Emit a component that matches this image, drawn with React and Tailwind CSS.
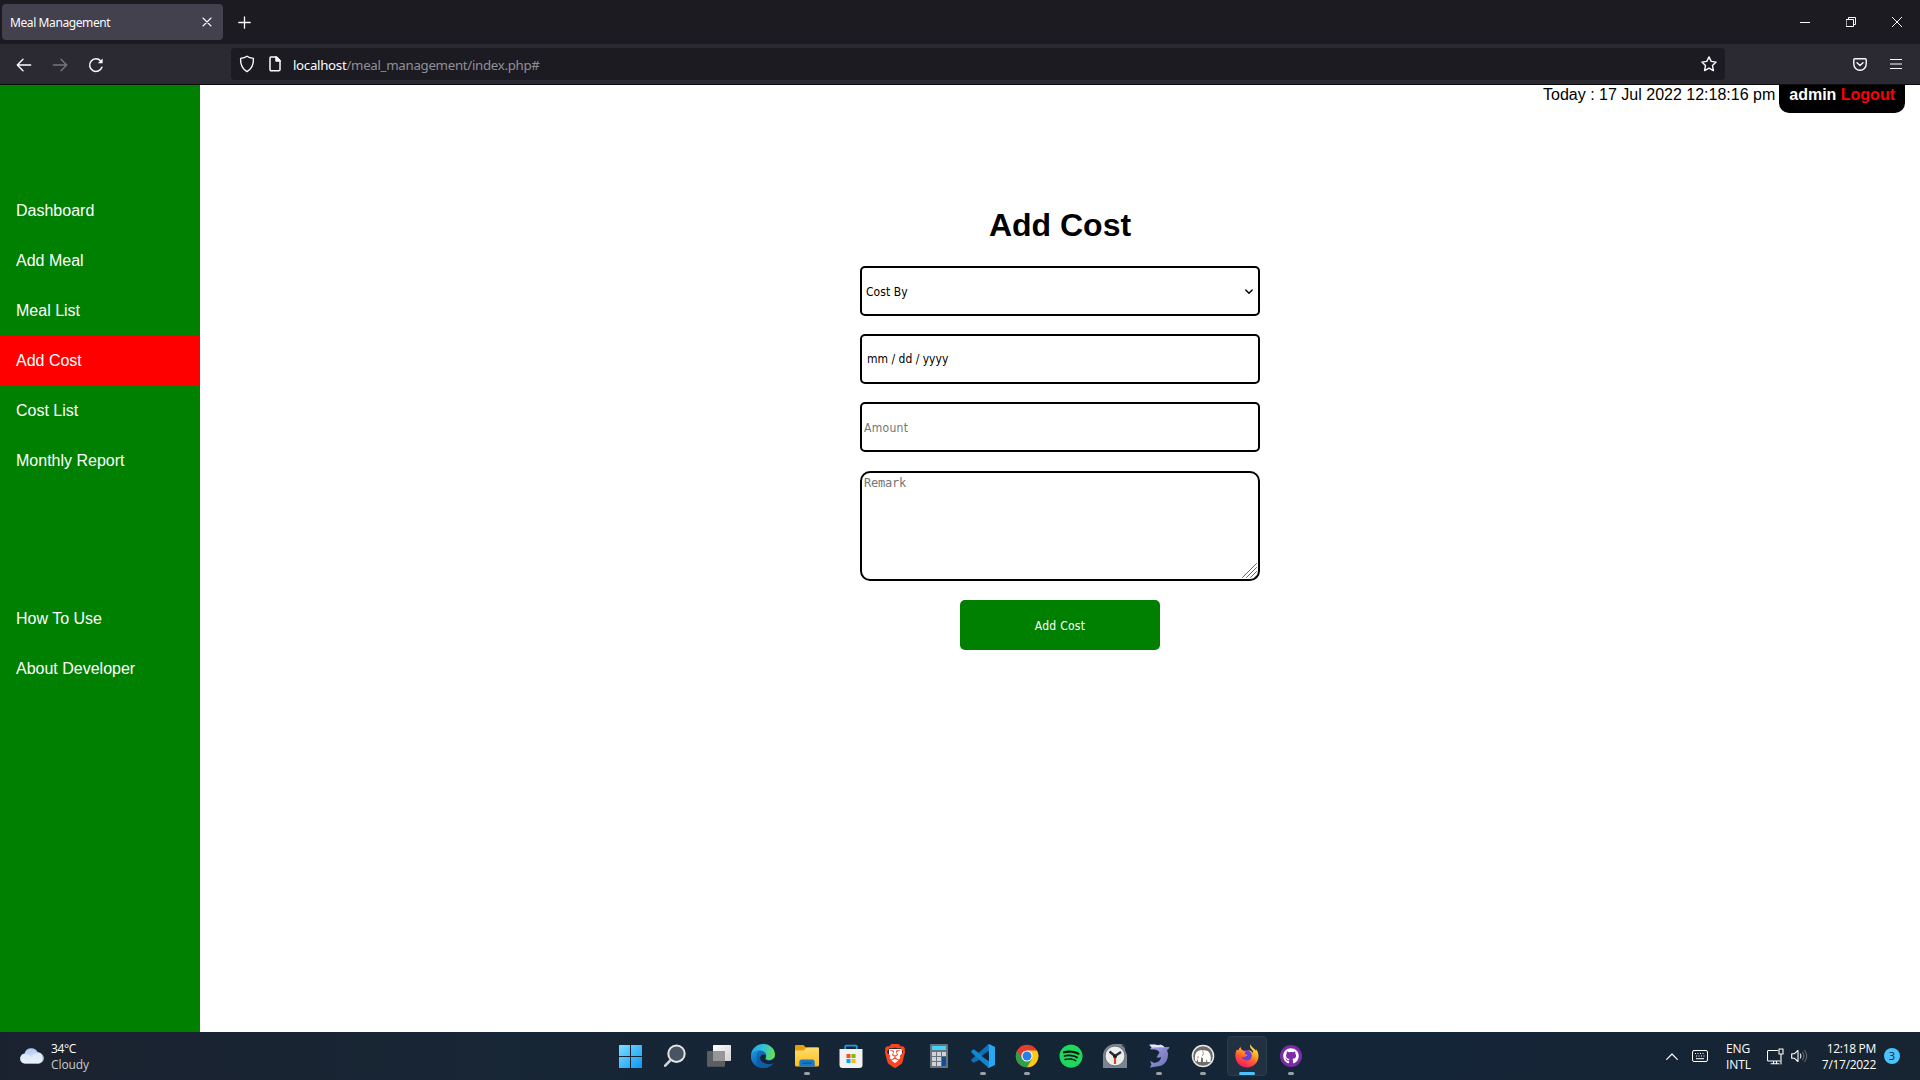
import { FaBrave, FaGithub, FaSpotify } from "react-icons/fa6";

const mainLinks = ["Dashboard", "Add Meal", "Meal List", "Add Cost", "Cost List", "Monthly Report"];
const helpLinks = ["How To Use", "About Developer"];

function Ico({ w = 16, h = w, box, className = "", children, sw = 1.4 }) {
  return (
    <svg width={w} height={h} viewBox={box || `0 0 ${w} ${h}`} className={"block shrink-0 " + className} fill="none" stroke="currentColor" strokeWidth={sw} strokeLinecap="round" strokeLinejoin="round">
      {children}
    </svg>
  );
}

function TabBar() {
  return (
    <div className="flex h-11 items-center bg-[#1c1b22] text-[#fbfbfe]">
      <div className="ml-0.5 flex h-9 w-[221px] items-center justify-between rounded bg-[#42414d] pl-2 pr-[11px]">
        <span className="pt-0.5 font-['Noto_Sans'] text-[12px] leading-4 tracking-[-0.400px]">Meal Management</span>
        <Ico w={10} sw={1.1}><path d="M1 1l8 8M9 1l-8 8" /></Ico>
      </div>
      <Ico w={13} className="ml-[15px]" sw={1.3}><path d="M6.5 .8v11.4M.8 6.5h11.4" /></Ico>
      <div className="ml-auto flex items-center gap-9 pr-[18px]">
        <Ico w={10} className="-mt-px" sw={1}><path d="M0 5.5h10" strokeLinecap="butt" /></Ico>
        <Ico w={10} sw={1}><path d="M.5 2.5h7v7h-7zM2.5 2V.5h7v7H8" strokeLinejoin="miter" /></Ico>
        <Ico w={10} sw={1}><path d="M.3.3l9.4 9.4M9.7.3L.3 9.7" /></Ico>
      </div>
    </div>
  );
}

function Toolbar() {
  return (
    <div className="flex h-[41px] items-center border-b border-[#0c0c0d] bg-[#2b2a33] text-[#fbfbfe]">
      <Ico w={16} className="ml-4 mt-px"><path d="M14.7 8H1.5M7 2.3L1.3 8 7 13.7" /></Ico>
      <Ico w={16} className="ml-5 mt-px text-[#76757c]"><path d="M1.3 8h13.2M9 2.3L14.7 8 9 13.7" /></Ico>
      <Ico w={16} className="ml-5 mt-px" sw={1.5}>
        <path d="M13.9 10.2A6.3 6.3 0 1 1 12.7 4" />
        <path d="M14.6 1.4v4.9H9.8z" fill="currentColor" stroke="none" />
      </Ico>
      <div className="ml-[127px] flex h-8 w-[1494px] items-center rounded bg-[#1c1b22]">
        <Ico w={16} h={18} className="ml-2" sw={1.4}><path d="M8 1.2c2 1.5 4 1.9 6.4 2.2.3 6-.9 10-6.4 13.2C2.500 13.400 1.300 9.400 1.600 3.400 4 3.100 6 2.700 8 1.200z" /></Ico>
        <Ico w={12} h={16} className="ml-[14px]" sw={1.5}>
          <path d="M2 1h5.500L11 4.500V13.500a1.200 1.200 0 0 1-1.200 1.200H2.200A1.200 1.200 0 0 1 1 13.500V2.200A1.200 1.200 0 0 1 2 1z" />
          <path d="M7 1v4h4z" fill="currentColor" />
        </Ico>
        <span className="ml-[12px] pt-0.5 font-['Noto_Sans'] text-[13.300px] leading-5 tracking-[-0.310px]">
          localhost<span className="text-[#8f8f98]">/meal_management/index.php#</span>
        </span>
        <Ico w={16} className="ml-auto mr-2" sw={1.400}><path d="M8 .900l2.200 4.500 4.900.700-3.600 3.500.900 5L8 12.200l-4.400 2.400.900-5L.900 6.100l4.900-.700z" /></Ico>
      </div>
      <Ico w={14} h={13} className="ml-auto" sw={1.400}>
        <path d="M1.800.800h10.400q1 0 1 1V6a6.200 6.200 0 0 1-12.400 0V1.800q0-1 1-1z" />
        <path d="M4 4.800l3 2.700 3-2.700" />
      </Ico>
      <Ico w={12} h={12} className="ml-[23px] mr-[18px]" sw={1.200}><path d="M0 1.500h12M0 6h12M0 10.500h12" /></Ico>
    </div>
  );
}

function NavLink({ label, active }) {
  return (
    <a href="#" className={"flex h-[50px] items-center pl-4 pt-0.5 " + (active ? "bg-[#ff0000]" : "")}>
      {label}
    </a>
  );
}

function Sidebar() {
  return (
    <nav className="w-[200px] shrink-0 bg-[#008000] pt-[100px] text-white">
      {mainLinks.map((l) => <NavLink key={l} label={l} active={l === "Add Cost"} />)}
      <div className="mt-[108px]">
        {helpLinks.map((l) => <NavLink key={l} label={l} />)}
      </div>
    </nav>
  );
}

const field = "block w-[400px] border-2 border-black bg-white outline-none font-['DejaVu_Sans_Condensed','DejaVu_Sans'] [font-stretch:condensed] text-[12px]";

function CostForm() {
  return (
    <form className="flex w-[400px] flex-col items-center">
      <h1 className="text-[32px] font-bold leading-9">Add Cost</h1>
      <div className="relative mt-[23px]">
        <select className={field + " h-[50px] appearance-none rounded-[5px] pl-1 pt-0.5 tracking-[0.050px]"}>
          <option>Cost By</option>
        </select>
        <Ico w={8} h={6} className="pointer-events-none absolute right-[7px] top-[23px]" sw={1.400}><path d="M.800.900L4 4.300 7.200.900" /></Ico>
      </div>
      <input placeholder="mm / dd / yyyy" className={field + " mt-[18px] h-[50px] rounded-[5px] pl-[5px] placeholder:text-black placeholder:opacity-100"} />
      <input placeholder="Amount" className={field + " mt-[18px] h-[50px] rounded-[5px] pl-[2px] pt-0.5 tracking-[0.300px] placeholder:text-[#757575]"} />
      <div className="relative mt-[19px]">
        <textarea placeholder="Remark" className="block h-[110px] w-[400px] resize-none rounded-[10px] border-2 border-black px-[2px] pt-[2px] font-['DejaVu_Sans_Mono'] text-[12px] leading-4 tracking-[-0.200px] outline-none placeholder:text-[#757575]" />
        <Ico w={15} h={15} className="absolute bottom-[3px] right-[3px] text-[#666]" sw={1}><path d="M.500 14.500l14-14M4.500 14.500l10-10M8.500 14.500l6-6M12.500 14.500l2-2" /></Ico>
      </div>
      <button type="button" className="mt-[19px] h-[50px] w-[200px] rounded-[5px] bg-[#008000] pt-0.5 font-['DejaVu_Sans_Condensed','DejaVu_Sans'] text-[12px] tracking-[0.250px] text-white [font-stretch:condensed]">Add Cost</button>
    </form>
  );
}

function Defs() {
  return (
    <svg width="0" height="0" className="absolute">
      <defs>
        <linearGradient id="win" x1="0" y1="0" x2="24" y2="24" gradientUnits="userSpaceOnUse"><stop stopColor="#7fe0fd" /><stop offset="1" stopColor="#0a95f2" /></linearGradient>
        <linearGradient id="white" x1="0" y1="0" x2="1" y2="1"><stop stopColor="#fff" /><stop offset="1" stopColor="#d0d0d0" /></linearGradient>
        <linearGradient id="edgeA" x1="0" y1="0.300" x2="1" y2="0.500"><stop stopColor="#27a5e5" /><stop offset=".5" stopColor="#30c3d5" /><stop offset="1" stopColor="#68e04a" /></linearGradient>
        <linearGradient id="edgeB" x1="0" y1="0" x2="0.500" y2="1"><stop stopColor="#1f9be6" /><stop offset="1" stopColor="#0b57a8" /></linearGradient>
        <linearGradient id="fold" x1="0" y1="0" x2="0" y2="1"><stop stopColor="#ffdc6b" /><stop offset="1" stopColor="#fcbd1e" /></linearGradient>
        <linearGradient id="ff" x1="0.800" y1="0" x2="0.300" y2="1"><stop stopColor="#fff04a" /><stop offset=".35" stopColor="#ffae1f" /><stop offset=".65" stopColor="#ff5733" /><stop offset="1" stopColor="#f5156c" /></linearGradient>
        <linearGradient id="dol" x1="0" y1="0" x2="1" y2="1"><stop stopColor="#a9a5e8" /><stop offset="1" stopColor="#6a70b5" /></linearGradient>
        <linearGradient id="cloud" x1="0" y1="0" x2="0" y2="1"><stop stopColor="#aac6f4" /><stop offset="1" stopColor="#eff5fd" /></linearGradient>
      </defs>
    </svg>
  );
}

function A({ children }) {
  return <svg width="24" height="24" viewBox="0 0 24 24" className="block">{children}</svg>;
}

const WinIcon = () => (
  <A><path fill="url(#win)" d="M0 1.500a.5.5 0 0 1 .5-.5H11V12H0zM12 1H22.500a.5.5 0 0 1 .5.5V12h-11zM0 13H11V24H.5a.5.5 0 0 1-.5-.5zM12 13h11V23.500a.5.5 0 0 1-.5.5H12z" /></A>
);
const SearchIcon = () => (
  <A>
    <circle cx="13.500" cy="9.700" r="8.200" fill="#485462" stroke="#e6e6e6" strokeWidth="2" />
    <path d="M7.600 16.200L2.200 21.700" stroke="#d4d4d4" strokeWidth="2.600" strokeLinecap="round" />
  </A>
);
const TaskViewIcon = () => (
  <A>
    <rect x="6" y="1" width="18" height="16" rx=".800" fill="url(#white)" />
    <rect x="0" y="7" width="18" height="15.700" rx=".800" fill="#5c5f62" />
    <rect x="6" y="7" width="12" height="10" fill="#969696" />
  </A>
);
const EdgeIcon = () => (
  <A>
    <circle cx="12" cy="12" r="12" fill="#1069bd" />
    <path d="M0 11.500C.700 4.500 6 0 12.200 0 19 0 24 5 24 10.600c0 3.400-2.700 5.400-5.800 5.400-2.700 0-4-1-4-1.700 0-.600 1-1 1-3 0-2.500-2.500-4.700-6-4.700C4.800 6.600 1 8.500 0 11.500z" fill="url(#edgeA)" />
    <path d="M0 12c.300-3.300 4.500-5.800 9-5.500-3 1.500-4 5-3.500 8.500.700 4.500 4 8 8.500 8.800C6 24.900-.500 19 0 12z" fill="url(#edgeB)" />
    <path d="M9 12.300c-.800 4.500 3.500 8 8.300 8 1.800 0 3.700-.700 4.800-1.300.500-.200.700.200.400.600C20 23 15 24.600 11.800 23.700 7.500 22.500 5.500 18.500 6.400 15c.400-1.600 1.300-2.500 2.600-2.700z" fill="#0f5ba4" />
    <path d="M14.700 13.700c-.500.600-.700 1.300.300 2.100 2.200 1.700 6.500 1 8-1.500l1-.600V18l-1.900 1.300c-4 2-10 .800-12.300-3-.900-1.500-.900-3.200.100-4.500 1.300-1.700 4.300-1.500 5.200-.400 0 1 0 1.700-.400 2.300z" fill="#142536" />
  </A>
);
const FolderIcon = () => (
  <A>
    <path d="M0 2a1 1 0 0 1 1-1h7.500L11 3.500H23a1 1 0 0 1 1 1V12H0z" fill="#e2a00d" />
    <path d="M0 6.500h8.500L11.500 3.600H23a1 1 0 0 1 1 1V21a1.500 1.500 0 0 1-1.500 1.500h-21A1.500 1.500 0 0 1 0 21z" fill="url(#fold)" />
    <path d="M4.300 22.500V18A2.500 2.500 0 0 1 6.800 15.500h10.400a2.500 2.500 0 0 1 2.500 2.500v4.500z" fill="#1779cc" />
    <path d="M8 19.200h8" stroke="#0c579d" strokeWidth="1.400" strokeLinecap="round" />
  </A>
);
const StoreIcon = () => (
  <A>
    <path d="M6.200 6V2.600Q6.200 1.700 7.100 1.700h9.800q.900 0 .9.900V6" fill="none" stroke="#1b9de2" strokeWidth="1.800" />
    <path d="M.500 5h23v16a3 3 0 0 1-3 3H3.500a3 3 0 0 1-3-3z" fill="#f2f2f2" />
    <path d="M7.500 10h4v4h-4z" fill="#f25022" /><path d="M12.500 10h4v4h-4z" fill="#7fba00" /><path d="M7.500 15h4v4h-4z" fill="#00a4ef" /><path d="M12.500 15h4v4h-4z" fill="#ffb900" />
  </A>
);
const BraveIcon = () => (
  <span className="relative grid size-6 place-items-center">
    <span className="absolute h-[15px] w-[13px] rounded-b-full bg-white" />
    <FaBrave size={24} color="#fb4420" className="relative" />
  </span>
);
const CalcIcon = () => (
  <A>
    <rect x="3" width="18" height="24" rx="1" fill="#68737e" />
    <rect x="5" y="2" width="14" height="4" fill="#46d3f7" />
    {[8, 13, 18].map((y) => [5, 10, 15].map((x) => <rect key={x + "-" + y} x={x} y={y} width="4" height="4" fill={x === 15 && y > 8 ? "#0d4ea3" : "#cdd3d9"} />))}
    <rect x="15" y="13" width="4" height="9" fill="#0d4ea3" />
  </A>
);
const CodeIcon = () => (
  <A>
    <path d="M17.500 0L24 3v4.500L3.200 18.600 2 18.400.300 16.700V15.500z" fill="#0c70b8" />
    <path d="M.300 8.500V7.300L2 5.600l1.200-.200L18.500 17l-.8 7z" fill="#1384cf" />
    <path d="M17.500 0L24 3v18l-6.500 3q-.600-.300-.900-.800.900.300 1.200-.700V1.300q0-.800-.7-1z" fill="#2ba7f2" />
    <path d="M17.800 6.700v10.600L10.500 12z" fill="#142536" />
  </A>
);
const ChromeIcon = () => (
  <A>
    <circle cx="12" cy="12" r="11.300" fill="#e43d30" />
    <path d="M2.200 6.400A11.300 11.300 0 0 0 12 23.300l5-8.500H7z" fill="#2da04c" />
    <path d="M21.900 6.400H12l5 8.500-5 8.400A11.300 11.300 0 0 0 21.900 6.400z" fill="#fdc917" />
    <circle cx="12" cy="12" r="5.600" fill="#fff" /><circle cx="12" cy="12" r="4.500" fill="#2b7de9" />
  </A>
);
const SpotifyIcon = () => (
  <span className="grid size-6 place-items-center rounded-full bg-[#08150d]"><FaSpotify size={24} color="#1ed760" /></span>
);
const ClockIcon = () => (
  <A>
    <path d="M0 24V12A12 12 0 0 1 12 0h7.500L22 2.500V6l2 5v13z" fill="#7a858f" />
    <path d="M18 .500h3L22.500 2v3z" fill="#33383e" />
    <circle cx="12" cy="12" r="9.900" fill="#ededed" stroke="#4c5660" strokeWidth=".700" />
    <path d="M12 12L6.500 7.500M12 12l6-4" stroke="#2a2d33" strokeWidth="2.400" />
    <path d="M12 13v7" stroke="#d6481c" strokeWidth="2.200" />
    <circle cx="12" cy="12.200" r="2" fill="#222" />
  </A>
);
const DolphinIcon = () => (
  <A>
    <path d="M2 .800C5.500.500 8.500.800 10.500 1.300L14 .200l.400 1.500C18.500 2.700 20.800 6 21 10c.3 6.500-3.500 11.700-9.600 12.300L6 23l-3 .800 1.500-3.500L3 17l4.300 2C12.500 18.300 14.600 15 14 11.500 13.500 8.700 11.500 6.200 7.500 5.600L3 5.200 4.500 3.500z" fill="url(#dol)" />
    <path d="M17.500 3c3 .400 4.900-.400 4.900 0 0 1.500-2 3.200-3.400 3.200zM13 7.500l-3.500 5.800c2.500.900 5 0 6-2z" fill="#8886cc" />
    <path d="M2.500.800C7 .200 9 .700 12 1.300l3-.300 3 2.500-4-.300-9 .200z" fill="#e9e8fb" />
  </A>
);
const MampIcon = () => (
  <A>
    <circle cx="12" cy="12" r="11.300" fill="#e8e8e8" /><circle cx="12" cy="12" r="9.800" fill="#6e6d68" />
    <path d="M4 15.800C3.500 11 5 7 8.500 6.600c1-.8 2-.8 3 0C16.500 5.500 19.500 8.500 19.800 13.500L19.500 18h-3.200l-.4-3.200-1 3.200H12l-.2-4-1.500-.8L9.800 18H7.300l-.5-3.200-1 2.700-1.300-.3z" fill="#fff" />
    <path d="M11.500 7.200c1.300 1.800 1 4-.7 5M6.800 14.500l.4-2.500" stroke="#6e6d68" strokeWidth=".700" fill="none" />
  </A>
);
const FirefoxIcon = () => (
  <A>
    <circle cx="12" cy="13" r="7" fill="#6c3fd6" />
    <path d="M15.300.200c-.800 2.200.200 4 1.500 5.200C18 6.500 18.300 8 18 9.200 17 7 14.600 6.100 12.500 6.300c2.500.700 4.300 2.700 4.300 5.300 0 3-2.200 5-5 5-2.600 0-4.800-1.800-4.800-3.800 1.200.6 2.300.4 3.500-.4.900-.600 1.800-.500 2-.600.2-1-1.500-1.600-2.700-1.600-.2-1.200.2-2.100 1.200-2.800C9 7 7.800 6.500 7 5.700 6 5 5.700 4 5.700 2.900 4.200 4 3.800 5 3.500 6.200l-1.800-.400C.300 8.200 0 11 .700 14.500 2 20 6.500 23.500 12 23.500c6.700 0 11.500-5.200 11.500-11.500 0-2.900-1-5.300-2.400-6.700l.1 1.800C19.500 4 16.300 3.500 15.300.200z" fill="url(#ff)" />
  </A>
);
const GithubIcon = () => (
  <span className="grid size-6 place-items-center">
    <span className="grid size-[22px] place-items-center rounded-full bg-[#7b2ca5]"><FaGithub size={16} color="#fff" /></span>
  </span>
);

const apps = [
  { I: WinIcon }, { I: SearchIcon }, { I: TaskViewIcon }, { I: EdgeIcon }, { I: FolderIcon, on: true }, { I: StoreIcon }, { I: BraveIcon }, { I: CalcIcon },
  { I: CodeIcon, on: true }, { I: ChromeIcon, on: true }, { I: SpotifyIcon }, { I: ClockIcon }, { I: DolphinIcon, on: true }, { I: MampIcon, on: true },
  { I: FirefoxIcon, active: true }, { I: GithubIcon, on: true },
];

function Taskbar() {
  return (
    <footer className="grid h-12 grid-cols-[609px_704px_607px] bg-[linear-gradient(90deg,#1b222f_0%,#182635_25%,#142536_50%,#142538_70%,#172432_100%)] font-['Open_Sans'] text-[12px] leading-4 text-white">
      <div className="flex items-center pl-5">
        <svg width="24" height="16" viewBox="0 0 24 16" className="block">
          <path d="M5 15.500A5 5 0 0 1 4.500 5.600 7 7 0 0 1 17.500 4 6 6 0 0 1 19 15.500z" fill="url(#cloud)" />
          <path d="M0 11a5 5 0 0 1 5-5c3 0 4 1 6 3 2-2.500 4-4 7.500-4A5.200 5.200 0 0 1 19 15.500H5A4.700 4.700 0 0 1 0 11z" fill="#e7effb" opacity=".65" />
        </svg>
        <div className="ml-[7px] pt-0.5 tracking-[-0.100px]">
          <div className="tracking-[-0.400px]">34°C</div>
          <div className="text-[#c6cacf]">Cloudy</div>
        </div>
      </div>
      <div className="flex">
        {apps.map(({ I, on, active }, i) => (
          <div key={i} className="flex w-11 justify-center pt-1">
            <div className={"flex h-10 w-10 flex-col items-center rounded pt-2 " + (active ? "border border-[#2d3c4c] bg-[#223142] pt-[7px]" : "")}>
              <I />
              {on && <span className="mt-1 h-[3px] w-1.5 rounded-full bg-[#9aa0a7]" />}
              {active && <span className="mt-1 h-[3px] w-4 rounded-full bg-[#4cc2ff]" />}
            </div>
          </div>
        ))}
      </div>
      <div className="flex items-center justify-end pr-5">
        <Ico w={12} h={7} sw={1.200}><path d="M.700 6.300L6 1l5.300 5.300" /></Ico>
        <Ico w={16} h={12} className="ml-[14px]" sw={1}>
          <rect x=".5" y=".5" width="15" height="11" rx="1.500" />
          <path d="M3 3.500h1m1.500 0h1m1.500 0h1m1.500 0h1M4 6h1m1.500 0h1m1.500 0h1m1.500 0h1M4 8.700h8" strokeLinecap="butt" />
        </Ico>
        <div className="ml-[18px] w-[25px] pt-0.5 tracking-[-0.050px]"><div>ENG</div><div>INTL</div></div>
        <Ico w={17} h={17} className="ml-4" sw={1.100}>
          <path d="M10.500 2.500H1.500a1 1 0 0 0-1 1v8.500a1 1 0 0 0 1 1h11.500M4 15.700h8M6.500 13v2.500M9.500 13v2.500" />
          <path d="M12 1h4v5h-4zM14 6v10" />
        </Ico>
        <Ico w={17} h={14} className="ml-[7px]" sw={1.100}>
          <path d="M.700 4.700H3.500L7 1.500v11L3.500 9.300H.700z" />
          <path d="M9.300 5q1.500 2 0 4" />
          <path d="M11.500 3.300q2.700 3.700 0 7.400M13.500 1.500q4.500 5.500 0 11" className="text-[#5c6875]" />
        </Ico>
        <div className="ml-[13px] w-[55px] whitespace-nowrap pt-px text-right tracking-[-0.300px]"><div className="flex justify-end">12:18 PM</div><div className="flex justify-end">7/17/2022</div></div>
        <span className="ml-2 grid size-4 place-items-center rounded-full bg-[#4cc2ff] text-[11px] text-[#10202d]">3</span>
      </div>
    </footer>
  );
}

export default function App() {
  return (
    <div className="flex h-[1080px] w-[1920px] flex-col overflow-hidden bg-white font-['Liberation_Sans',sans-serif] text-base text-black">
      <Defs />
      <TabBar />
      <Toolbar />
      <div className="flex min-h-0 flex-1">
        <Sidebar />
        <main className="flex flex-1 flex-col items-center">
          <div className="flex h-7 items-start gap-1 self-end pr-[15px] leading-5">
            <span>Today : 17 Jul 2022 12:18:16 pm</span>
            <div className="h-7 rounded-b-[10px] bg-black px-2.5 font-bold text-white">
              admin <a href="#" className="text-[#ff0000]">Logout</a>
            </div>
          </div>
          <div className="mt-[94px]"><CostForm /></div>
        </main>
      </div>
      <Taskbar />
    </div>
  );
}
